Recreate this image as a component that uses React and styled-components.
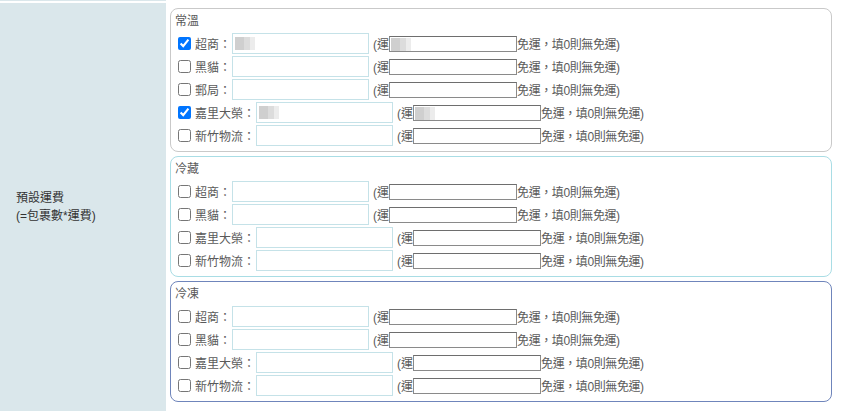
import React from "react";
import styled, { createGlobalStyle, css } from "styled-components";

const GlobalStyle = createGlobalStyle`
  body {
    margin: 0;
    background: #fff;
    font-family: "Liberation Sans", "Noto Sans CJK TC", sans-serif;
    font-size: 12px;
    color: #5a5a5a;
  }
`;

const Sheet = styled.div`
  display: grid;
  grid-template-columns: 166px 662px;
  column-gap: 4px;
  row-gap: 2px;
  width: 832px;
`;

const LabelCell = styled.div`
  background: #dae7eb;
  height: ${(p) => (p.h ? `${p.h}px` : "auto")};
  display: flex;
  flex-direction: column;
  justify-content: center;
  padding-left: ${(p) => (p.h ? 0 : 16)}px;
  color: #333;
  line-height: 18px;
`;

const ContentCell = styled.div`
  display: flex;
  flex-direction: column;
  gap: 4px;
  padding: 5px 0 9px;
`;

const Box = styled.div`
  border: 1px solid ${(p) => p.tone};
  border-radius: 8px;
  padding: 4px 4px 5px 4px;
  display: flex;
  flex-direction: column;
  gap: 2px;
`;

const BoxTitle = styled.div`
  line-height: 17px;
  height: 17px;
  margin-bottom: 1px;
`;

const Row = styled.div`
  display: flex;
  align-items: center;
  height: 21px;
  white-space: nowrap;
`;

const Check = styled.input.attrs({ type: "checkbox" })`
  width: 13px;
  height: 13px;
  margin: 0 4px 0 3px;
`;

const Label = styled.span`
  margin-right: 1px;
`;

const masked = css`
  background-image: linear-gradient(
    to right,
    #cfcfcf 0 9px,
    #dcdcdc 9px 15px,
    #ececec 15px 20px
  );
  background-repeat: no-repeat;
  background-position: 2px 3px;
  background-size: 20px 13px;
`;

const FeeInput = styled.input.attrs({ type: "text" })`
  box-sizing: border-box;
  width: 137px;
  height: 21px;
  border: 1px solid #c5e2e8;
  padding: 0 4px;
  outline: none;
  background-color: #fff;
  ${(p) => p.$masked && masked}
`;

const Note = styled.span`
  margin-left: 4px;
`;

const FreeInput = styled.input.attrs({ type: "text" })`
  box-sizing: border-box;
  width: 128px;
  height: 16px;
  border: 1px solid #8a8a8a;
  border-top-color: #6e6e6e;
  padding: 0 2px;
  outline: none;
  background-color: #fff;
  ${(p) => p.$masked && masked}
  background-position: 1px 1px;
`;

const Tail = styled.span`
  letter-spacing: -0.4px;
`;

const groups = [
  {
    title: "常溫",
    tone: "#c9c9c9",
    rows: [
      { name: "超商", checked: true, masked: true },
      { name: "黑貓" },
      { name: "郵局" },
      { name: "嘉里大榮", checked: true, masked: true },
      { name: "新竹物流" },
    ],
  },
  {
    title: "冷藏",
    tone: "#a9dde5",
    rows: [{ name: "超商" }, { name: "黑貓" }, { name: "嘉里大榮" }, { name: "新竹物流" }],
  },
  {
    title: "冷凍",
    tone: "#6f85bb",
    rows: [{ name: "超商" }, { name: "黑貓" }, { name: "嘉里大榮" }, { name: "新竹物流" }],
  },
];

const ShipRow = ({ row }) => (
  <Row>
    <Check defaultChecked={row.checked} />
    <Label>{row.name}：</Label>
    <FeeInput $masked={row.masked} />
    <Note>(運</Note>
    <FreeInput $masked={row.masked} />
    <Tail>免運，填0則無免運)</Tail>
  </Row>
);

export default function App() {
  return (
    <>
      <GlobalStyle />
      <Sheet>
        <LabelCell h={1} />
        <div />
        <LabelCell>
          <div>預設運費</div>
          <div>(=包裹數*運費)</div>
        </LabelCell>
        <ContentCell>
          {groups.map((g) => (
            <Box key={g.title} tone={g.tone}>
              <BoxTitle>{g.title}</BoxTitle>
              {g.rows.map((r) => (
                <ShipRow key={r.name} row={r} />
              ))}
            </Box>
          ))}
        </ContentCell>
        <LabelCell h={4} />
        <div />
      </Sheet>
    </>
  );
}
